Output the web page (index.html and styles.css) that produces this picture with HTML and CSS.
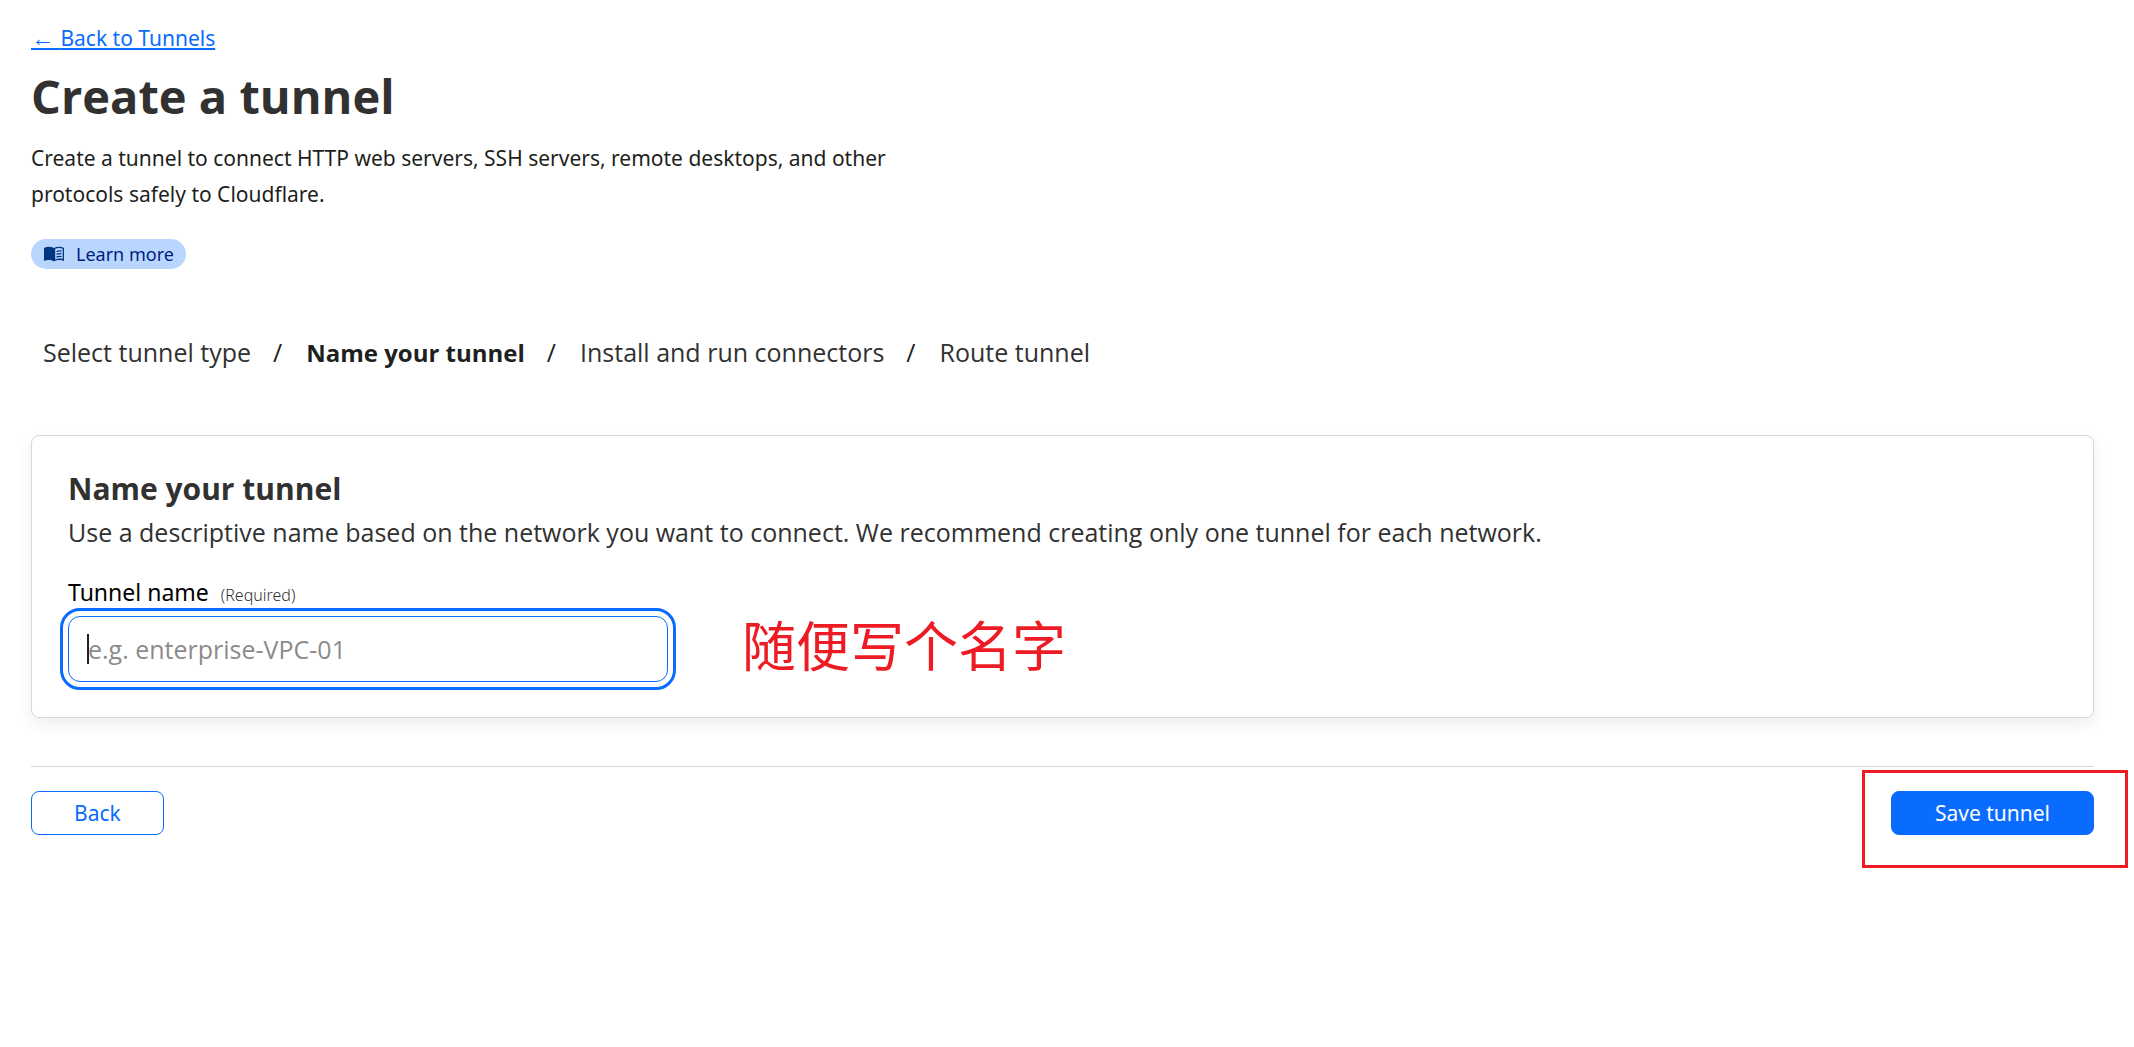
FILE: index.html
```html
<!DOCTYPE html>
<html lang="en">
<head>
  <meta charset="utf-8">
  <meta name="viewport" content="width=device-width, initial-scale=1">
  <title>Create a tunnel</title>
  <link rel="stylesheet" href="styles.css">
</head>
<body>
  <main class="page">
    <header class="intro">
      <a class="back-link" href="#"><span class="arrow">← </span>Back to Tunnels</a>
      <h1 class="page-title">Create a tunnel</h1>
      <p class="description">Create a tunnel to connect HTTP web servers, SSH servers, remote desktops, and other protocols safely to Cloudflare.</p>
      <a class="learn-more" href="#">
        <svg class="book-icon" viewBox="0 0 20 16" aria-hidden="true">
          <path fill="#003681" d="M0 2C3 .2 7 .2 10 2C13 .2 17 .2 20 2V15C17 13.700 13 13.700 10 15.500C7 13.700 3 13.700 0 15Z"/>
          <path fill="#b9d6ff" d="M11.200 2.800C13.500 1.700 16.500 1.700 18.700 2.700V13C16.500 12.400 13.500 12.400 11.200 13.400Z"/>
          <path fill="none" stroke="#003681" stroke-width="1.200" d="M12.500 5.700C14 5 16 4.800 17.600 5.200M12.500 8.400C14 7.700 16 7.500 17.600 7.900M12.500 11.100C14 10.400 16 10.200 17.600 10.600"/>
        </svg>
        Learn more
      </a>
    </header>

    <nav aria-label="Progress">
      <ol class="steps">
        <li>Select tunnel type</li>
        <li class="current" aria-current="step">Name your tunnel</li>
        <li>Install and run connectors</li>
        <li>Route tunnel</li>
      </ol>
    </nav>

    <form class="form">
      <section class="card">
        <h2 class="card-title">Name your tunnel</h2>
        <p class="card-text">Use a descriptive name based on the network you want to connect. We recommend creating only one tunnel for each network.</p>
        <label class="label" for="tunnel-name">Tunnel name <span class="required">(Required)</span></label>
        <div class="field-row">
          <div class="field">
            <input class="input" id="tunnel-name" type="text" placeholder="e.g. enterprise-VPC-01" required>
          </div>
          <span class="note" lang="zh-CN">随便写个名字</span>
        </div>
      </section>

      <footer class="actions">
        <button class="button" type="button">Back</button>
        <div class="highlight">
          <button class="button primary" type="submit">Save tunnel</button>
        </div>
      </footer>
    </form>
  </main>
</body>
</html>
```

FILE: styles.css
```css
* {
  box-sizing: border-box;
}

body {
  margin: 0;
  background: #fff;
  color: #1d1f20;
  font-family: "Noto Sans", "Open Sans", sans-serif;
  font-size: 21px;
}

h1, h2, p, ol {
  margin: 0;
  padding: 0;
}

.page {
  padding: 22px 40px 40px 31px;
}

.intro {
  display: flex;
  flex-direction: column;
  align-items: flex-start;
}

.back-link {
  color: #0a6cff;
  line-height: 32px;
  text-decoration-thickness: 2px;
  text-underline-offset: 2px;
}

.arrow {
  font-family: "Liberation Sans", sans-serif;
  font-size: 23px;
  line-height: 20px;
}

.page-title {
  margin-top: 12px;
  color: #313131;
  font-family: "Open Sans", sans-serif;
  font-size: 47px;
  font-weight: 700;
  line-height: 60px;
}

.description {
  max-width: 900px;
  margin-top: 14px;
  line-height: 36px;
}

.learn-more {
  display: flex;
  align-items: center;
  gap: 12px;
  height: 30px;
  margin-top: 27px;
  padding: 0 12px 0 13px;
  border-radius: 15px;
  background: #b9d6ff;
  color: #001c80;
  font-size: 18px;
  line-height: 28px;
  text-decoration: none;
}

.book-icon {
  width: 20px;
  height: 16px;
}

.steps {
  display: flex;
  flex-wrap: wrap;
  margin-top: 65px;
  padding-left: 12px;
  color: #313131;
  font-family: "Open Sans", sans-serif;
  font-size: 25px;
  line-height: 36px;
  list-style: none;
}

.steps li + li::before {
  content: "/";
  margin: 0 24px 0 22px;
  color: #1d1f20;
  font-size: 25px;
  font-weight: 400;
}

.steps .current {
  color: #1d1f20;
  font-size: 24px;
  font-weight: 700;
}

.form {
  margin-top: 64px;
}

.card {
  padding: 33px 36px 35px;
  border: 1px solid #d5d7d8;
  border-radius: 8px;
  box-shadow: 0 6px 16px rgba(0, 0, 0, 0.07);
}

.card-title {
  color: #313131;
  font-family: "Open Sans", sans-serif;
  font-size: 30px;
  font-weight: 700;
  line-height: 40px;
}

.card-text {
  color: #313131;
  font-family: "Open Sans", sans-serif;
  font-size: 25px;
  line-height: 46px;
}

.label {
  display: flex;
  align-items: baseline;
  gap: 12px;
  margin-top: 21px;
  color: #000;
  font-size: 23px;
  line-height: 32px;
}

.required {
  color: #313131;
  font-size: 16px;
  font-weight: 300;
  line-height: 24px;
}

.field-row {
  display: flex;
  gap: 74px;
  margin-top: 8px;
}

.field {
  position: relative;
  flex: 0 1 600px;
}

/* text cursor of the focused field */
.field::before {
  content: "";
  position: absolute;
  top: 18px;
  left: 19px;
  width: 2px;
  height: 30px;
  background: #1d1f20;
}

.input {
  display: block;
  width: 100%;
  height: 66px;
  padding: 0 19px;
  border: 1px solid #0a6cff;
  border-radius: 12px;
  outline: 3px solid #0a6cff;
  outline-offset: 5px;
  background: transparent;
  color: #1d1f20;
  font-family: "Open Sans", sans-serif;
  font-size: 25px;
}

.input::placeholder {
  color: #8b8b8b;
  opacity: 1;
}

.note {
  color: #ed1c24;
  font-family: "Noto Sans CJK SC", sans-serif;
  font-size: 54px;
  line-height: 56px;
}

.actions {
  display: flex;
  justify-content: space-between;
  margin-top: 48px;
  padding-top: 24px;
  border-top: 1px solid #d5d7d8;
}

.button {
  display: block;
  height: 44px;
  padding: 0 42px;
  border: 1px solid #0a6cff;
  border-radius: 8px;
  background: #fff;
  color: #0a6cff;
  font-family: inherit;
  font-size: 21px;
  line-height: 40px;
}

.primary {
  padding: 0 43px;
  background: #0a6cff;
  color: #fff;
}

.highlight {
  position: relative;
}

.highlight::after {
  content: "";
  position: absolute;
  inset: -21px -34px -33px -29px;
  border: 3px solid #ed1c24;
  pointer-events: none;
}
```
